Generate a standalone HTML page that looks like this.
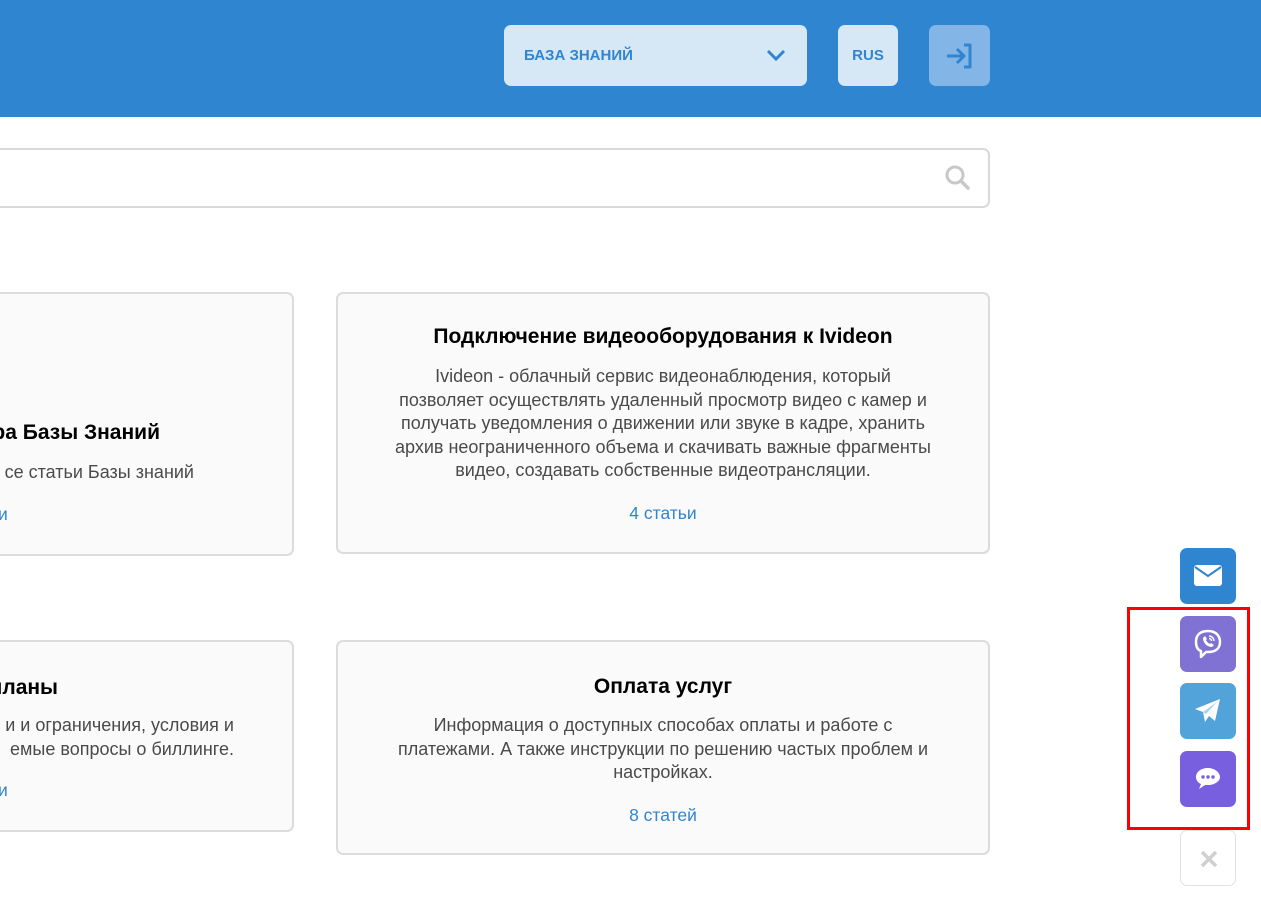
<!DOCTYPE html>
<html><head><meta charset="utf-8"><style>
*{margin:0;padding:0;box-sizing:border-box}
body{width:1261px;height:900px;overflow:hidden;background:#fff;font-family:"Liberation Sans",sans-serif;position:relative}
.hdr{position:absolute;left:0;top:0;width:1261px;height:117px;background:#3085d0}
.kb{position:absolute;left:504px;top:25px;width:303px;height:61px;background:#d6e7f6;border-radius:7px;color:#3085d0;font-weight:bold;font-size:15px;line-height:61px;padding-left:20px}
.rus{position:absolute;left:838px;top:25px;width:60px;height:61px;background:#d6e7f6;border-radius:7px;color:#3085d0;font-weight:bold;font-size:15px;line-height:61px;text-align:center}
.login{position:absolute;left:929px;top:25px;width:61px;height:61px;background:#83b5e6;border-radius:7px}
.search{position:absolute;left:-10px;top:148px;width:1000px;height:60px;border:2px solid #d9d9d9;border-radius:7px}
.card{position:absolute;background:#fafafa;border:2px solid #dcdcdc;border-radius:7px}
.t{position:absolute;white-space:nowrap;font-weight:bold;color:#000;font-size:21px}
.d{position:absolute;white-space:nowrap;color:#4a4a4a;font-size:18px;line-height:23.5px}
.c{text-align:center;left:0;width:650px}
.lnk{position:absolute;color:#3085d0;font-size:17.5px;white-space:nowrap}
.btn{position:absolute;left:1180px;width:56px;height:56px;border-radius:7px}
</style></head><body>
<div class="hdr"></div>
<div class="kb">БАЗА ЗНАНИЙ
<svg style="position:absolute;left:262px;top:23px" width="20" height="14" viewBox="0 0 20 14"><path d="M2 3l8 8 8-8" fill="none" stroke="#3085d0" stroke-width="3"/></svg></div>
<div class="rus">RUS</div>
<div class="login"><svg style="position:absolute;left:16px;top:17px" width="30" height="28" viewBox="0 0 30 28"><path d="M2 14h17M12 7l7 7-7 7M19 3h6v22h-6" fill="none" stroke="#3085d0" stroke-width="3" stroke-linejoin="round"/></svg></div>
<div class="search"><svg style="position:absolute;left:952px;top:14px" width="28" height="28" viewBox="0 0 28 28"><circle cx="11" cy="11" r="8" fill="none" stroke="#c8c8c8" stroke-width="3"/><path d="M17 17l7 7" stroke="#c8c8c8" stroke-width="3.5" stroke-linecap="round"/></svg></div>

<div class="card" style="left:-20px;top:292px;width:314px;height:264px">
<div class="t" style="right:132px;top:127px;">ра Базы Знаний</div>
<div class="d" style="right:98px;top:167px;">се статьи Базы знаний</div>
<div class="lnk" style="left:16px;top:210px">и</div>
</div>
<div class="card" style="left:336px;top:292px;width:654px;height:262px">
<div class="t c" style="top:31px">Подключение видеооборудования к Ivideon</div>
<div class="d c" style="top:71px">Ivideon - облачный сервис видеонаблюдения, который<br>позволяет осуществлять удаленный просмотр видео с камер и<br>получать уведомления о движении или звуке в кадре, хранить<br>архив неограниченного объема и скачивать важные фрагменты<br>видео, создавать собственные видеотрансляции.</div>
<div class="lnk c" style="top:209px;text-align:center">4 статьи</div>
</div>
<div class="card" style="left:-20px;top:640px;width:314px;height:192px">
<div class="t" style="right:234px;top:34px">планы</div>
<div class="d" style="right:58px;top:72px;text-align:right">и и ограничения, условия и<br>емые вопросы о биллинге.</div>
<div class="lnk" style="left:16px;top:138px">и</div>
</div>
<div class="card" style="left:336px;top:640px;width:654px;height:215px">
<div class="t c" style="top:33px">Оплата услуг</div>
<div class="d c" style="top:72px">Информация о доступных способах оплаты и работе с<br>платежами. А также инструкции по решению частых проблем и<br>настройках.</div>
<div class="lnk c" style="top:163px;text-align:center">8 статей</div>
</div>

<div class="btn" style="top:548px;background:#3085d0"><svg style="position:absolute;left:14px;top:17px" width="28" height="22" viewBox="0 0 28 22"><rect x="0" y="0" width="28" height="21" rx="3" fill="#fff"/><path d="M1 2l13 9 13-9" fill="none" stroke="#3085d0" stroke-width="2"/></svg></div>
<div style="position:absolute;left:1127px;top:607px;width:123px;height:223px;border:3px solid #f00"></div>
<div class="btn" style="top:616px;background:#7f72d4"><svg style="position:absolute;left:13px;top:12px" width="30" height="32" viewBox="0 0 30 32"><path d="M15 3C7 3 3 7 3 14c0 5 2 8 5 9v6l5-5h2c8 0 12-4 12-10S23 3 15 3z" fill="none" stroke="#fff" stroke-width="2.5" stroke-linejoin="round"/><path d="M10 10c0 5 4 9 9 9l2-2-3-2-1 1c-2-1-3-2-4-4l1-1-2-3z" fill="#fff"/><path d="M16 8a5 5 0 0 1 5 5M16 10.5a2.5 2.5 0 0 1 2.5 2.5" fill="none" stroke="#fff" stroke-width="1.4"/></svg></div>
<div class="btn" style="top:683px;background:#52a3da"><svg style="position:absolute;left:13px;top:13px" width="30" height="30" viewBox="0 0 30 30"><path d="M27 3L2 13l8 3 2 10 4-6 6 5z" fill="#fff"/><path d="M10 16l14-10-11 12" fill="#52a3da" opacity=".5"/></svg></div>
<div class="btn" style="top:751px;background:#775fe0"><svg style="position:absolute;left:14px;top:14px" width="28" height="28" viewBox="0 0 28 28"><path d="M14 3C7 3 2 7 2 12c0 3 2 6 5 7l-2 5 6-4h3c7 0 12-4 12-8s-5-9-12-9z" fill="#fff"/><circle cx="9" cy="12" r="1.7" fill="#775fe0"/><circle cx="14" cy="12" r="1.7" fill="#775fe0"/><circle cx="19" cy="12" r="1.7" fill="#775fe0"/></svg></div>
<div class="btn" style="top:830px;background:#fff;border:1px solid #e2e2e2"><svg style="position:absolute;left:18px;top:18px" width="20" height="20" viewBox="0 0 20 20"><path d="M3 3l14 14M17 3L3 17" stroke="#cfcfcf" stroke-width="3.5"/></svg></div>
</body></html>
